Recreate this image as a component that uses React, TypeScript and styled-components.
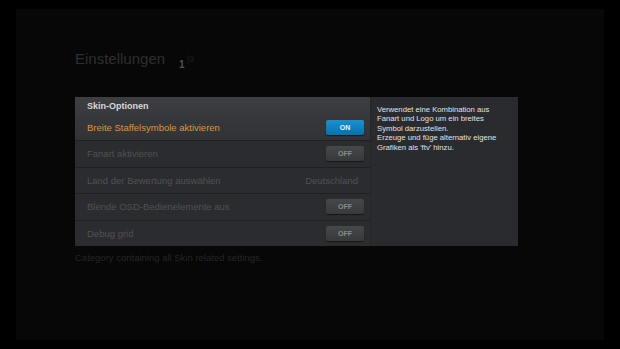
import styled, { createGlobalStyle } from "styled-components";

type Row = {
  label: string;
  kind: "toggle" | "value";
  on?: boolean;
  value?: string;
  focused?: boolean;
};

const rows: Row[] = [
  { label: "Breite Staffelsymbole aktivieren", kind: "toggle", on: true, focused: true },
  { label: "Fanart aktivieren", kind: "toggle", on: false },
  { label: "Land der Bewertung auswählen", kind: "value", value: "Deutschland" },
  { label: "Blende OSD-Bedienelemente aus", kind: "toggle", on: false },
  { label: "Debug grid", kind: "toggle", on: false },
];

const GlobalStyle = createGlobalStyle`
  html, body {
    margin: 0;
    padding: 0;
    background: #000;
  }
  body {
    font-family: "Liberation Sans", Arial, sans-serif;
  }
`;

const App = () => {
  return (
    <>
      <GlobalStyle />
      <Screen>
        <Stage>
          <TitleBar>
            <Title>Einstellungen</Title>
            <Counter>
              1<Total>|9</Total>
            </Counter>
          </TitleBar>
          <Dialog>
            <List>
              <Header>Skin-Optionen</Header>
              {rows.map((row) => (
                <Item key={row.label} $focused={!!row.focused}>
                  <Label $focused={!!row.focused}>{row.label}</Label>
                  {row.kind === "toggle" ? (
                    <Toggle $on={!!row.on}>{row.on ? "ON" : "OFF"}</Toggle>
                  ) : (
                    <Value>{row.value}</Value>
                  )}
                </Item>
              ))}
            </List>
            <Info>
              Verwendet eine Kombination aus
              <br />
              Fanart und Logo um ein breites
              <br />
              Symbol darzustellen.
              <br />
              Erzeuge und füge alternativ eigene
              <br />
              Grafiken als 'ftv' hinzu.
            </Info>
          </Dialog>
          <Footer>Category containing all Skin related settings.</Footer>
        </Stage>
      </Screen>
    </>
  );
};

export default App;

const Screen = styled.div`
  width: 620px;
  height: 349px;
  padding: 9px 16px;
  box-sizing: border-box;
  background: #000;
  overflow: hidden;
`;

const Stage = styled.div`
  height: 100%;
  background: #070707;
  padding: 0 59px;
  display: flex;
  flex-direction: column;
`;

const TitleBar = styled.div`
  display: flex;
  align-items: flex-end;
  gap: 14px;
  padding-top: 37px;
  height: 22px;
`;

const Title = styled.div`
  font-size: 15px;
  color: #2f2f2f;
  line-height: 18px;
`;

const Counter = styled.div`
  font-size: 10px;
  font-weight: bold;
  color: #505050;
  line-height: 12px;
  margin-bottom: -3px;
`;

const Total = styled.span`
  font-weight: normal;
  color: #1e1e1e;
  font-size: 9px;
  vertical-align: 6px;
  margin-left: 2px;
`;

const Dialog = styled.div`
  margin-top: 29px;
  display: flex;
  width: 443px;
  height: 149px;
`;

const List = styled.div`
  width: 295px;
  display: flex;
  flex-direction: column;
  background: #2b2c2f;
`;

const Header = styled.div`
  height: 18px;
  display: flex;
  align-items: center;
  padding-left: 12px;
  background: linear-gradient(#3e3f42, #38393c);
  color: #d8d8d8;
  font-size: 9px;
  font-weight: bold;
`;

const Item = styled.div<{ $focused: boolean }>`
  height: 26px;
  display: flex;
  align-items: center;
  justify-content: space-between;
  padding: 0 6px 0 12px;
  background: ${(p) => (p.$focused ? "linear-gradient(#36383b, #313336)" : "#2b2c2f")};
  border-bottom: 1px solid #1f2022;
  &:last-child {
    border-bottom: none;
  }
`;

const Label = styled.span<{ $focused: boolean }>`
  font-size: 9.5px;
  color: ${(p) => (p.$focused ? "#dc9833" : "#505153")};
`;

const Value = styled.span`
  font-size: 9.5px;
  color: #505153;
  margin-right: 6px;
`;

const Toggle = styled.span<{ $on: boolean }>`
  width: 38px;
  height: 15px;
  border-radius: 2px;
  display: flex;
  align-items: center;
  justify-content: center;
  font-size: 7px;
  font-weight: bold;
  color: ${(p) => (p.$on ? "#e8f4fb" : "#8a8a8a")};
  background: ${(p) =>
    p.$on ? "linear-gradient(#1b90d0, #0671ad)" : "linear-gradient(#47484a, #38393b)"};
  box-shadow: 0 1px 1px rgba(0, 0, 0, 0.5);
`;

const Info = styled.div`
  width: 148px;
  background: #2a2b2e;
  border-left: 1px solid #242527;
  padding: 8px 6px;
  box-sizing: border-box;
  font-size: 7.7px;
  line-height: 9.4px;
  color: #e2e2e2;
`;

const Footer = styled.div`
  margin-top: 6px;
  font-size: 9.5px;
  color: #262626;
`;
